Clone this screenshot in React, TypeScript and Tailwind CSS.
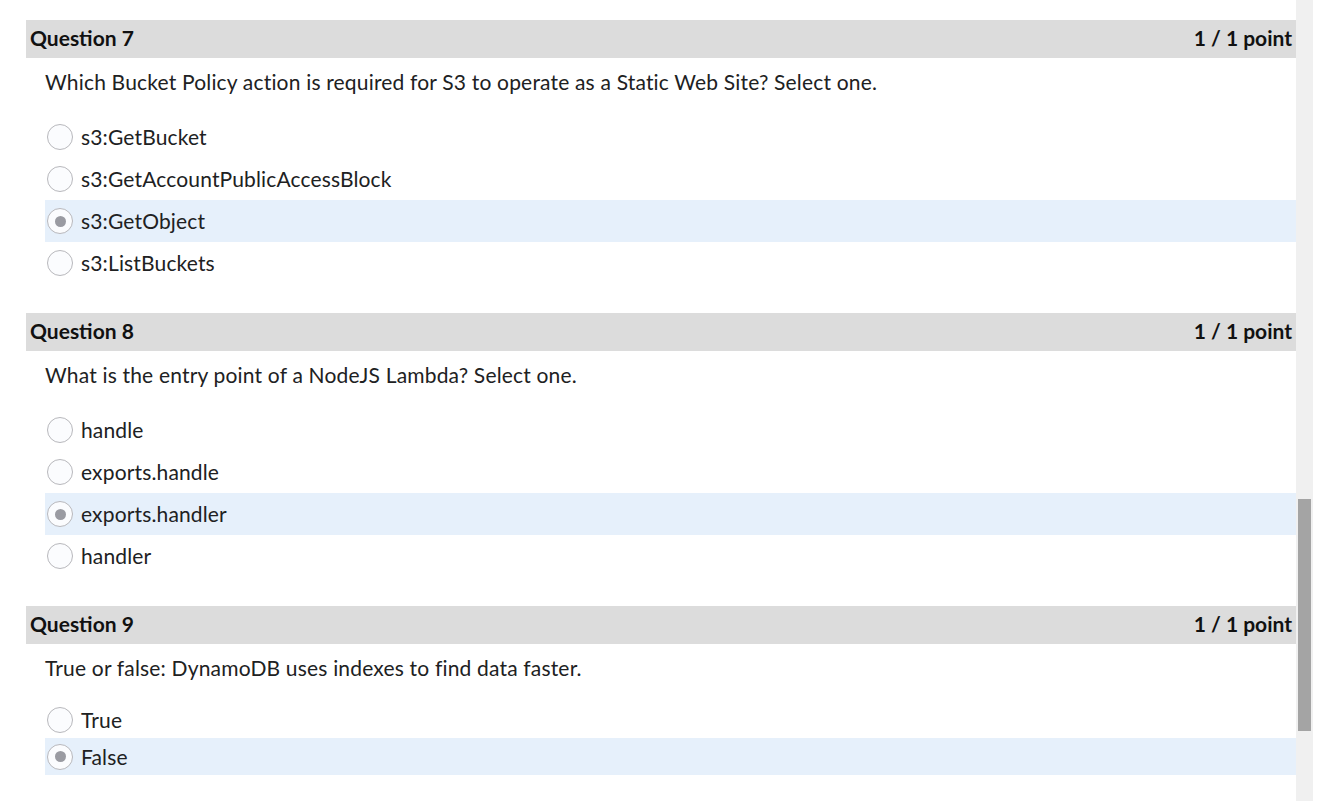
import React from "react";

type Q = {
  num: number;
  text: string;
  options: string[];
  selected: number;
  compact?: boolean;
};

const questions: Q[] = [
  {
    num: 7,
    text: "Which Bucket Policy action is required for S3 to operate as a Static Web Site? Select one.",
    options: ["s3:GetBucket", "s3:GetAccountPublicAccessBlock", "s3:GetObject", "s3:ListBuckets"],
    selected: 2,
  },
  {
    num: 8,
    text: "What is the entry point of a NodeJS Lambda? Select one.",
    options: ["handle", "exports.handle", "exports.handler", "handler"],
    selected: 2,
  },
  {
    num: 9,
    text: "True or false: DynamoDB uses indexes to find data faster.",
    options: ["True", "False"],
    selected: 1,
    compact: true,
  },
];

function Radio({ checked }: { checked: boolean }) {
  return (
    <span className="w-[26px] h-[26px] rounded-full border border-[#b8b8bc] bg-[#fbfcfe] flex items-center justify-center shrink-0">
      {checked && <span className="w-[11px] h-[11px] rounded-full bg-[#9a9ba2]" />}
    </span>
  );
}

function Question({ q }: { q: Q }) {
  return (
    <div>
      <div className="h-[38px] bg-[#dcdcdc] flex items-center justify-between px-[4px] pb-[3px] font-bold text-[21px] text-[#111]">
        <span>Question {q.num}</span>
        <span>1 / 1 point</span>
      </div>
      <p
        className={`pl-[19px] text-[21px] tracking-[0.18px] text-[#202122] leading-[24px] mt-[12px] [font-variant-ligatures:none] ${q.compact ? "mb-[21px]" : "mb-[22px]"}`}
      >
        {q.text}
      </p>
      <div className="pl-[19px]">
        {q.options.map((o, i) => (
          <div
            key={o}
            className={`flex items-center gap-[8px] pl-[2px] ${q.compact ? "h-[37px]" : "h-[42px]"} ${i === q.selected ? "bg-[#e6f0fb]" : ""}`}
          >
            <Radio checked={i === q.selected} />
            <span className="text-[21px] tracking-[0.15px] text-[#202122]">{o}</span>
          </div>
        ))}
      </div>
    </div>
  );
}

export default function App() {
  return (
    <div className="w-[1341px] h-[801px] bg-white flex overflow-hidden" style={{ fontFamily: "Lato, 'Noto Sans', sans-serif" }}>
      <div className="w-[1296px] pl-[26px] pt-[20px] flex flex-col gap-[29px]">
        {questions.map((q) => (
          <Question key={q.num} q={q} />
        ))}
      </div>
      <div className="w-[17px] h-full bg-[#f0f0f0] relative">
        <div className="absolute left-[2px] top-[499px] w-[13px] h-[232px] bg-[#a4a4a4]" />
      </div>
    </div>
  );
}
